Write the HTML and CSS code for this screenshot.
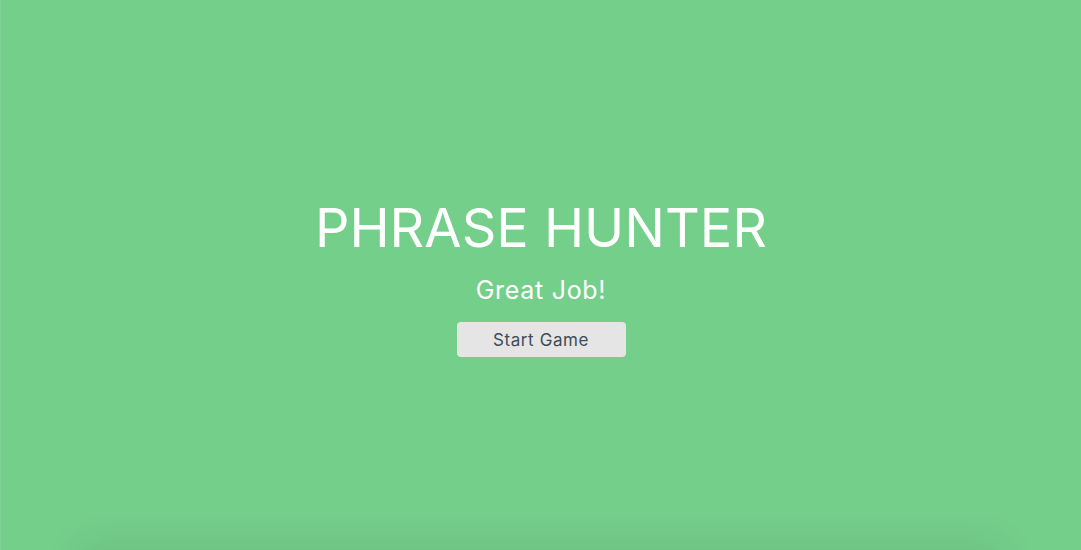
FILE: index.html
```html
<!DOCTYPE html>
<html lang="en">
<head>
<meta charset="utf-8">
<title>Phrase Hunter</title>
<link rel="stylesheet" href="styles.css">
</head>
<body>
<div class="overlay">
  <h2 class="title">PHRASE HUNTER</h2>
  <h1 class="message">Great Job!</h1>
  <button class="btn-reset">Start Game</button>
</div>
</body>
</html>
```

FILE: styles.css
```css
html, body {
  margin: 0;
  padding: 0;
}
body {
  background: #ffffff;
  font-family: Inter, "Open Sans", sans-serif;
  overflow: hidden;
  height: 550px;
}
.overlay {
  position: relative;
  overflow: hidden;
  height: 550px;
  background: #74cf8b;
  border-left: 1px solid #80d396;
  box-sizing: border-box;
  display: flex;
  flex-direction: column;
  align-items: center;
  padding-top: 197px;
}
.overlay::after {
  content: "";
  position: absolute;
  top: 100%;
  left: 80px;
  right: 80px;
  height: 30px;
  box-shadow: 0 0 40px rgba(0, 0, 0, 0.12);
}
.title {
  margin: 0;
  color: #ffffff;
  font-weight: 400;
  font-size: 54px;
  line-height: 62px;
  letter-spacing: 0;
}
.message {
  margin: 15px 0 0;
  color: #ffffff;
  font-weight: 400;
  font-size: 25px;
  line-height: 32px;
  letter-spacing: 0.7px;
}
.btn-reset {
  margin-top: 16px;
  width: 169px;
  height: 35px;
  border: none;
  border-radius: 4px;
  background: #e5e5e5;
  color: #3d4c58;
  font-family: Inter, "Open Sans", sans-serif;
  font-size: 17px;
  letter-spacing: 0.6px;
  padding: 0;
}
```
